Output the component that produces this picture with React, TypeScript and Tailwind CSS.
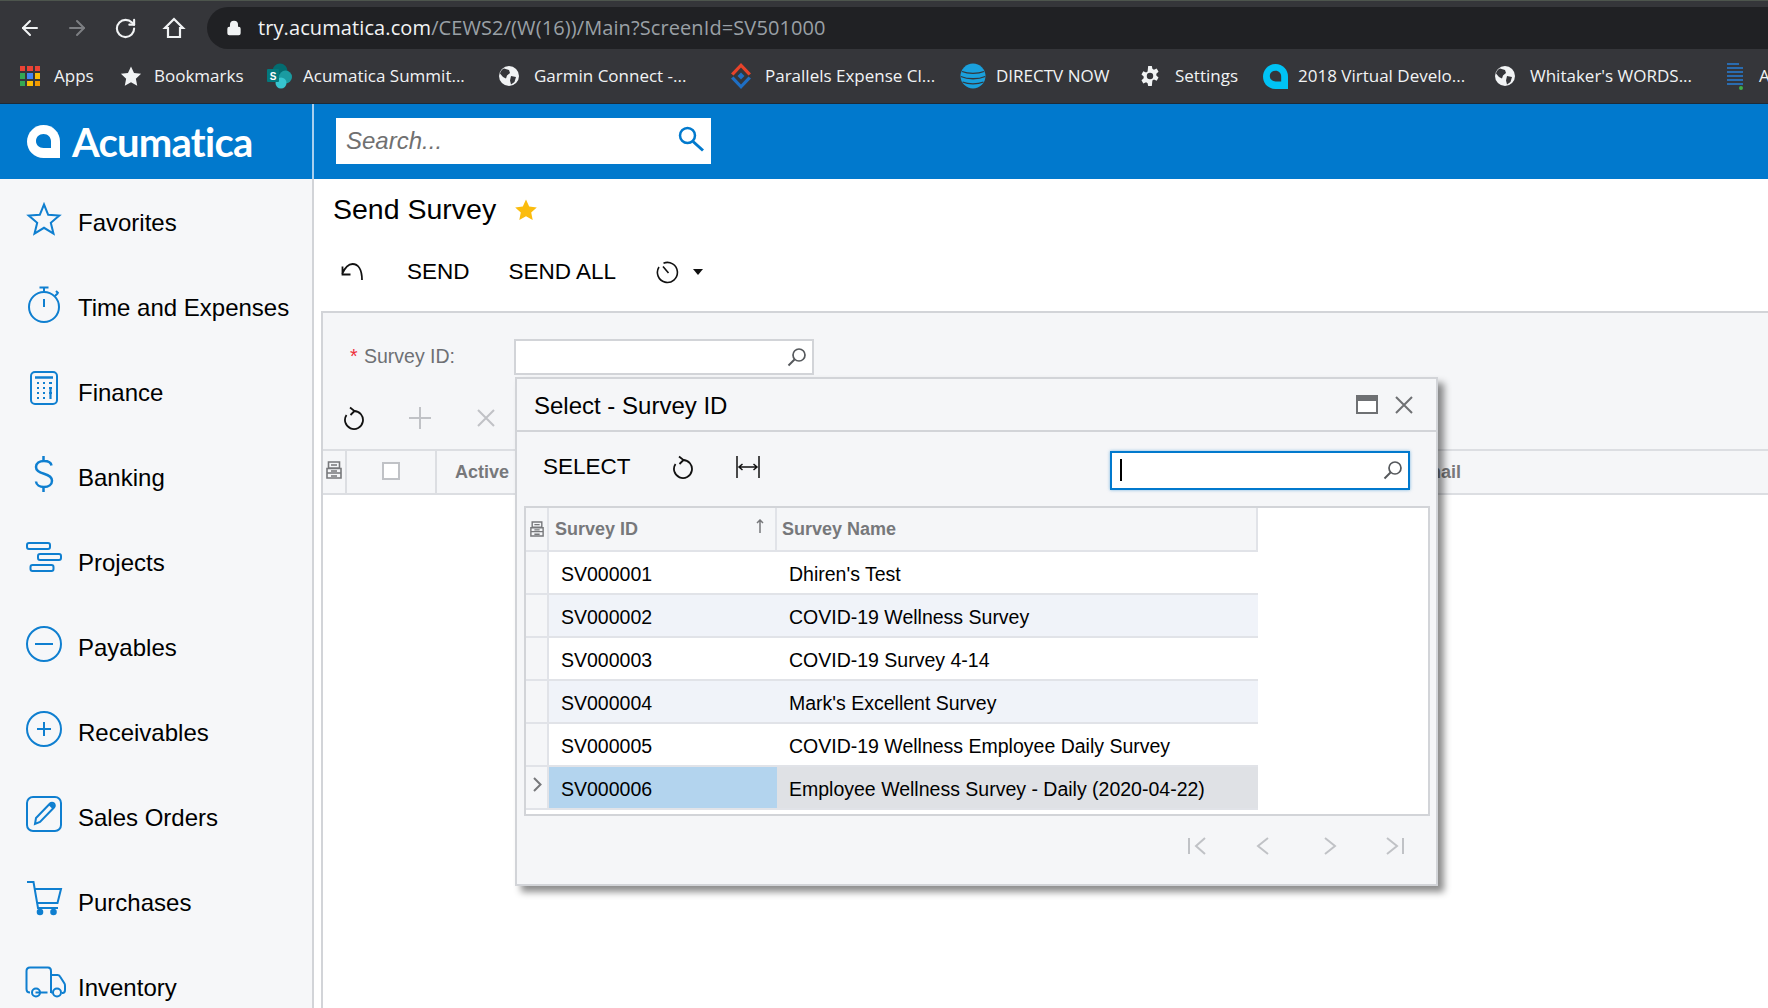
import React from 'react';
import { ArrowLeft, ArrowRight, RotateCw, Lock } from 'lucide-react';

const sansFont = "font-['Liberation_Sans',Arial,sans-serif]";

const Globe = () => (
  <svg width="22" height="22" viewBox="0 0 22 22">
    <circle cx="11" cy="11" r="10" fill="#f1f3f4" />
    <path d="M6 3.5l5 1.5 1 3-3 2.5-1 3-3-1.5-3-3.5C2.5 6 4 4.500 6 3.500zM13 11l5 1-1.500 5-3.500 2.500-1-4z" fill="#35363a" />
  </svg>
);

const AppsIcon = () => {
  const colors = ['#ea4335', '#ea4335', '#ea4335', '#34a853', '#4285f4', '#fbbc05', '#34a853', '#fbbc05', '#f29900'];
  return (
    <div className="grid grid-cols-3 gap-[2px] w-[20px]">
      {colors.map((c, i) => (
        <span key={i} className="w-[5.300px] h-[5.300px]" style={{ backgroundColor: c }} />
      ))}
    </div>
  );
};

const SharePointIcon = () => (
  <svg width="26" height="26" viewBox="0 0 26 26">
    <circle cx="13" cy="8" r="7.500" fill="#036c70" />
    <circle cx="18.500" cy="14" r="6.500" fill="#1a9ba1" />
    <circle cx="14" cy="20" r="5.500" fill="#37c6d0" />
    <rect x="0" y="6" width="12" height="13" rx="1" fill="#03787c" />
    <text x="6" y="16.500" textAnchor="middle" fontSize="10" fontWeight="700" fill="#fff" fontFamily="Liberation Sans">S</text>
  </svg>
);

const ParallelsIcon = () => (
  <svg width="22" height="26" viewBox="0 0 22 26">
    <path d="M11 0L21 10.500 18.500 12.500 11 4.500 3.500 12.500 1 10.500z" fill="#e8432a" />
    <path d="M1 15.500L3.500 13.500 11 21.500 18.500 13.500 21 15.500 11 26z" fill="#1f6fc4" />
    <path d="M11 9.500L14.500 13 11 16.500 7.500 13z" fill="#1f6fc4" />
  </svg>
);

const AttIcon = () => (
  <svg width="26" height="26" viewBox="0 0 26 26">
    <circle cx="13" cy="13" r="12.500" fill="#1aa0dc" />
    <path d="M2 8.500c6 2.500 16 2.500 22 0M.800 13.500c7 3 17.500 3 24.400 0M2.500 19c6 2.500 15 2.500 21 0" stroke="#35363a" strokeWidth="1.300" fill="none" />
  </svg>
);

const GearIcon = () => (
  <svg width="22" height="24" viewBox="0 0 24 24" fill="#f1f3f4">
    <path fillRule="evenodd" d="M10 1h4l.6 3.200 1.700.9 3-1.200 2 3.500-2.400 2.100v2l2.400 2.100-2 3.500-3-1.200-1.700.9L14 23h-4l-.6-3.200-1.700-.9-3 1.200-2-3.500 2.400-2.100v-2L2.700 10.400l2-3.500 3 1.200 1.700-.9zM12 8.500a3.500 3.500 0 100 7 3.500 3.500 0 000-7z" />
  </svg>
);

const LogoMark = ({ color, hole, size }: { color: string; hole: string; size: number }) => (
  <svg width={size} height={size} viewBox="0 0 33 33">
    <path d="M16.500 0C26 0 33 7.500 33 16.500V33H16.500C7.500 33 0 26 0 16.500 0 7.500 7.500 0 16.500 0z" fill={color} />
    <path d="M16.500 9c4.500 0 7.500 3.500 7.500 7.500v6.500h-7.500C12 23 9 20 9 16c0-4 3-7 7.500-7z" fill={hole} />
  </svg>
);

const ListLinesIcon = () => (
  <svg width="20" height="28" viewBox="0 0 20 28">
    <path d="M2 2h12M2 6h16M2 10h16M2 14h16M2 18h16M2 22h16" stroke="#2a6cb0" strokeWidth="2" />
    <circle cx="16" cy="26" r="2" fill="#3fae49" />
  </svg>
);

const bookmarks = [
  { label: 'Apps', icon: <AppsIcon />, width: 'w-[100px]', iconBox: 'w-[34px]' },
  { label: 'Bookmarks', icon: <svg width="22" height="22" viewBox="0 0 24 24" fill="#f1f3f4"><path d="M12 1.500l3.300 7.200 7.700.9-5.700 5.300 1.500 7.800-6.800-3.900-6.800 3.900 1.500-7.800L1 9.600l7.700-.9z" /></svg>, width: 'w-[147px]', iconBox: 'w-[34px]' },
  { label: 'Acumatica Summit...', icon: <SharePointIcon />, width: 'w-[231px]', iconBox: 'w-[36px]' },
  { label: 'Garmin Connect -...', icon: <Globe />, width: 'w-[232px]', iconBox: 'w-[36px]' },
  { label: 'Parallels Expense Cl...', icon: <ParallelsIcon />, width: 'w-[230px]', iconBox: 'w-[35px]' },
  { label: 'DIRECTV NOW', icon: <AttIcon />, width: 'w-[179px]', iconBox: 'w-[36px]' },
  { label: 'Settings', icon: <GearIcon />, width: 'w-[124px]', iconBox: 'w-[36px]' },
  { label: '2018 Virtual Develo...', icon: <LogoMark color="#00c3f5" hole="#35363a" size={25} />, width: 'w-[231px]', iconBox: 'w-[35px]' },
  { label: "Whitaker's WORDS...", icon: <Globe />, width: 'w-[231px]', iconBox: 'w-[36px]' },
  { label: 'A', icon: <ListLinesIcon />, width: 'w-[60px]', iconBox: 'w-[34px]' },
];

const BLUE = '#0f7fd0';

const navItems = [
  {
    label: 'Favorites',
    icon: <path d="M18 3.500l4.200 10.300 11.100.8-8.500 7.200 2.700 10.900-9.500-5.900-9.500 5.900 2.700-10.900-8.500-7.200 11.100-.8z" />,
  },
  {
    label: 'Time and Expenses',
    icon: (
      <>
        <circle cx="18" cy="21" r="15" />
        <path d="M18 13v8M13.500 1.500h9M18 1.500v4M30 5l2.500 2.500M29 10l3-3" />
      </>
    ),
  },
  {
    label: 'Finance',
    icon: (
      <>
        <rect x="5" y="1" width="26" height="32" rx="4" />
        <path d="M9 6.500h18" strokeWidth="2.500" />
        <path d="M11 12h2M17 12h2M23 12h3M11 17h2M17 17h2M23 17h3M11 22h2M17 22h2M23 22h3M11 27h2M17 27h2M24.500 17v11" strokeWidth="2.200" />
      </>
    ),
  },
  {
    label: 'Banking',
    icon: <path strokeWidth="2.500" d="M25.500 9.500C25 6.500 22 5 18 5c-4.500 0-8 2.300-8 6 0 3.700 3.500 5.500 8 6.800 4.500 1.300 8 3 8 6.900 0 3.800-3.500 6.300-8 6.300-4.300 0-7.700-2-8-5.500M17.500 0v5M17.500 31v5" />,
  },
  {
    label: 'Projects',
    icon: (
      <>
        <rect x="1" y="2" width="23" height="6" rx="2" />
        <rect x="12" y="13" width="23" height="6" rx="2" />
        <rect x="4.500" y="24" width="23" height="6" rx="2" />
      </>
    ),
  },
  {
    label: 'Payables',
    icon: (
      <>
        <circle cx="18" cy="18" r="17" />
        <path d="M9 18h18" />
      </>
    ),
  },
  {
    label: 'Receivables',
    icon: (
      <>
        <circle cx="18" cy="18" r="17" />
        <path d="M11 18h14M18 11v14" />
      </>
    ),
  },
  {
    label: 'Sales Orders',
    icon: (
      <>
        <rect x="1" y="1" width="34" height="34" rx="6" />
        <path d="M9 28l1-6L24 7.500c1-1 3-1 4 0s1 3 0 4L14 26z" />
        <path d="M24 7.500l4 4" strokeWidth="4" />
      </>
    ),
  },
  {
    label: 'Purchases',
    icon: (
      <>
        <path d="M1 1h6.500l4.500 26h20M9 8h26l-3.500 14H11" />
        <circle cx="14" cy="31" r="2.300" fill={BLUE} />
        <circle cx="27.500" cy="31" r="2.300" fill={BLUE} />
      </>
    ),
  },
  {
    label: 'Inventory',
    icon: (
      <>
        <path d="M4 26.500c-2 0-3.500-1-3.500-3.500V5c0-2 1.500-3.500 3.500-3.500h18c2 0 3 1.500 3 3.500v22M9.500 26.500h12M25 9h6.500c1 0 2 .5 2.500 1.500l4.500 7c.5.800.5 1.500.5 2.500v4c0 2-1 3-2.500 3H36M25 26.500h1.500" />
        <circle cx="10" cy="26.500" r="4" />
        <circle cx="31" cy="26.500" r="4" />
      </>
    ),
  },
];

const surveys = [
  ['SV000001', "Dhiren's Test"],
  ['SV000002', 'COVID-19 Wellness Survey'],
  ['SV000003', 'COVID-19 Survey 4-14'],
  ['SV000004', "Mark's Excellent Survey"],
  ['SV000005', 'COVID-19 Wellness Employee Daily Survey'],
  ['SV000006', 'Employee Wellness Survey - Daily (2020-04-22)'],
];

const ColumnIcon = ({ size = 16 }: { size?: number }) => (
  <svg width={size} height={size + 2} viewBox="0 0 16 18" fill="none" stroke="#77787b" strokeWidth="1.600">
    <path d="M2.500 1h11v6h-11zM1 7.500h14V17H1zM1 12h14" />
    <path d="M5 4h6M5 10h6M5 15h6" />
  </svg>
);

const RefreshIcon = () => (
  <svg width="22" height="24" viewBox="0 0 22 24" fill="none" stroke="#111" strokeWidth="1.800">
    <path d="M11 5A9 9 0 1 1 3.500 9" />
    <path d="M7 1.500L11.500 5 7.500 9" />
  </svg>
);

const LensIcon = () => (
  <svg width="20" height="20" viewBox="0 0 20 20" fill="none" stroke="#55585c" strokeWidth="1.700">
    <circle cx="12" cy="8" r="6" />
    <path d="M7.500 12.500L1.500 18.500" strokeWidth="2" />
  </svg>
);

const App: React.FC = () => {
  return (
    <div className={`relative w-[1768px] h-[1008px] overflow-hidden bg-white text-black ${sansFont}`}>
      {/* browser chrome */}
      <div className="h-[1px] bg-[#4d554d]" />
      <div className="h-[48px] bg-[#35363a] flex items-end font-['Open_Sans',sans-serif]">
        <div className="flex items-center h-[42px] shrink-0 w-[207px] pl-[18px]">
          <ArrowLeft size={24} color="#f1f3f4" strokeWidth={2} />
          <ArrowRight size={24} color="#7d7f83" strokeWidth={2} className="ml-[23px]" />
          <RotateCw size={23} color="#f1f3f4" strokeWidth={2.200} className="ml-[25px]" />
          <svg width="24" height="24" viewBox="0 0 24 24" fill="none" stroke="#f1f3f4" strokeWidth="2.200" className="ml-[25px]">
            <path d="M12 3L3 12h3v9h12v-9h3z" />
          </svg>
        </div>
        <div className="flex-1 h-[42px] bg-[#202124] rounded-l-[21px] flex items-center pl-[19px]">
          <Lock size={16} color="#f1f3f4" fill="#f1f3f4" strokeWidth={2} />
          <span className="ml-[16px] text-[20px] tracking-[0.1px] text-[#9aa0a6] whitespace-nowrap">
            <span className="text-[#f1f3f4]">try.acumatica.com</span>/CEWS2/(W(16))/Main?ScreenId=SV501000
          </span>
        </div>
      </div>
      <div className="h-[55px] bg-[#35363a] border-b border-[#1d2b38] flex items-center pl-[20px] font-['Open_Sans',sans-serif] text-[17px] text-[#f1f3f4] whitespace-nowrap">
        {bookmarks.map((b) => (
          <div key={b.label} className={`flex items-center shrink-0 ${b.width}`}>
            <span className={`shrink-0 flex items-center ${b.iconBox}`}>{b.icon}</span>
            <span>{b.label}</span>
          </div>
        ))}
      </div>

      {/* app header */}
      <div className="h-[75px] bg-[#0179cd] flex">
        <div className="w-[312px] shrink-0 flex items-center pl-[27px]">
          <LogoMark color="#ffffff" hole="#0179cd" size={33} />
          <span className="ml-[12px] text-[40px] leading-none font-['Lato',sans-serif] font-bold text-white tracking-[-0.75px]">Acumatica</span>
        </div>
        <div className="w-[2px] bg-[#a9cfee]" />
        <div className="pl-[22px] pt-[14px]">
          <div className="w-[375px] h-[46px] bg-white flex items-center pl-[10px] pr-[7px] justify-between">
            <span className="italic text-[24px] text-[#707070]">Search...</span>
            <svg width="26" height="26" viewBox="0 0 26 26" fill="none" stroke="#0179cd" strokeWidth="2.500" className="-mt-[4px]">
              <circle cx="9.500" cy="9.500" r="7.500" />
              <path d="M15 15.500L25 24.500" strokeWidth="3" />
            </svg>
          </div>
        </div>
      </div>

      <div className="flex h-[829px]">
        {/* sidebar */}
        <nav className="w-[314px] shrink-0 pt-[1px] bg-[#f6f7f9] border-r-2 border-[#d2d4d8]">
          {navItems.map((item) => (
            <div key={item.label} className="h-[85px] flex items-center text-[24px] whitespace-nowrap">
              <svg width="36" height="36" viewBox="0 0 36 36" fill="none" stroke={BLUE} strokeWidth="2" className="ml-[26px] mr-[16px] -mt-[8px] overflow-visible shrink-0">
                {item.icon}
              </svg>
              <span>{item.label}</span>
            </div>
          ))}
        </nav>

        {/* page */}
        <main className="flex-1 flex flex-col min-w-0">
          <div className="h-[61px] flex items-center pl-[19px]">
            <h1 className="text-[28.500px] font-normal">Send Survey</h1>
            <svg width="24" height="24" viewBox="0 0 24 24" fill="#fbbc0d" className="ml-[18px]">
              <path d="M12 1.500l3.200 7 7.600.9-5.600 5.200 1.500 7.500-6.700-3.800-6.700 3.800 1.500-7.500L1.200 9.400l7.600-.9z" />
            </svg>
          </div>
          <div className="h-[71px] pb-[7px] flex items-center pl-[26px] text-[22.500px]">
            <svg width="24" height="20" viewBox="0 0 24 20" fill="none" stroke="#111" strokeWidth="1.800">
              <path d="M2 12C5 5.500 8 2 12.500 2 18 2 22 7 22 18M2.500 4.500v8h8" />
            </svg>
            <span className="ml-[43px]">SEND</span>
            <span className="ml-[39px]">SEND ALL</span>
            <svg width="24" height="24" viewBox="0 0 24 24" fill="none" stroke="#111" strokeWidth="1.600" className="ml-[40px]">
              <path d="M7.500 3.200A10 10 0 1 1 3 7M7 6.500l5.500 6.500" />
            </svg>
            <span className="ml-[13px] w-0 h-0 border-x-[5.500px] border-x-transparent border-t-[6px] border-t-[#111]" />
          </div>

          <section className="flex-1 ml-[7px] bg-[#f5f6f8] border-t-2 border-l-2 border-[#d2d4d8] flex flex-col min-h-0">
            <div className="h-[64px] pt-[26px] flex items-start">
              <div className="h-[36px] flex items-center pl-[27px] w-[191px] text-[19.500px] text-[#6e7074]">
                <span className="text-[#ee2f3c] mr-[5px] w-[9px]">*</span>
                <span>Survey ID:</span>
              </div>
              <div className="w-[300px] h-[36px] bg-white border-2 border-[#d2d4d8] flex items-center justify-end pr-[5px]">
                <LensIcon />
              </div>
            </div>
            <div className="h-[72px] flex items-center pl-[20px] pt-[10px]">
              <RefreshIcon />
              <svg width="22" height="22" viewBox="0 0 22 22" stroke="#c0c2c6" strokeWidth="2" className="ml-[44px]">
                <path d="M11 0v22M0 11h22" />
              </svg>
              <svg width="18" height="18" viewBox="0 0 18 18" stroke="#c0c2c6" strokeWidth="2" className="ml-[46px]">
                <path d="M1 1l16 16M17 1L1 17" />
              </svg>
            </div>
            <div className="h-[46px] border-y-2 border-[#dcdee2] flex items-stretch text-[18px] font-bold text-[#77787b]">
              <div className="w-[24px] pb-[4px] border-r-2 border-[#dcdee2] flex items-center justify-center"><ColumnIcon /></div>
              <div className="w-[90px] pb-[3px] border-r-2 border-[#dcdee2] flex items-center justify-center">
                <span className="w-[18px] h-[18px] bg-white border-2 border-[#c0c2c6]" />
              </div>
              <div className="w-[976px] pl-[18px] flex items-center">Active</div>
              <div className="flex items-center">Email</div>
            </div>
            <div className="flex-1 bg-white" />
          </section>
        </main>
      </div>

      {/* lookup dialog */}
      <div className="absolute left-[515px] top-[377px] w-[923px] h-[509px] bg-[#f5f6f8] border-2 border-[#d2d4d8] shadow-[6px_6px_7px_rgba(0,0,0,0.45)] flex flex-col">
        <div className="h-[53px] border-b-2 border-[#d2d4d8] flex items-center pl-[17px] pr-[23px] shrink-0">
          <span className="text-[24px] flex-1 pt-[2px]">Select - Survey ID</span>
          <div className="w-[22px] h-[19px] border-2 border-[#6e7073] border-t-[6px] bg-white" />
          <svg width="18" height="18" viewBox="0 0 18 18" stroke="#6e7073" strokeWidth="2" className="ml-[17px]">
            <path d="M1 1l16 16M17 1L1 17" />
          </svg>
        </div>
        <div className="h-[74px] shrink-0 flex items-center pl-[26px] pr-[26px] text-[22.500px]">
          <span className="-mt-[5px]">SELECT</span>
          <span className="ml-[41px] -mt-[5px]"><RefreshIcon /></span>
          <svg width="24" height="22" viewBox="0 0 24 22" fill="none" stroke="#111" strokeWidth="1.500" className="ml-[42px] -mt-[5px]">
            <path d="M1 0v22M23 0v22M3 11h18M6.500 8L3 11l3.500 3M17.500 8l3.500 3-3.500 3" />
          </svg>
          <div className="ml-auto mt-[2px] w-[300px] h-[39px] bg-white border-2 border-[#0179cd] shadow-[0_0_3px_rgba(1,121,205,0.5)] flex items-center justify-between pl-[8px] pr-[5px]">
            <span className="w-[2px] h-[22px] bg-black" />
            <LensIcon />
          </div>
        </div>

        <div className="ml-[7px] mr-[6px] h-[310px] bg-white border-2 border-[#d2d4d8] shrink-0">
          <div className="w-[732px]">
            <div className="h-[44px] flex bg-[#f5f6f8] border-b-2 border-r-2 border-[#e1e3e8] text-[18px] font-bold text-[#77787b]">
              <div className="w-[23px] shrink-0 border-r-2 border-[#e1e3e8] flex items-center justify-center"><ColumnIcon size={14} /></div>
              <div className="w-[228px] shrink-0 border-r-2 border-[#e1e3e8] flex items-center justify-between pl-[6px] pr-[11px]">
                <span>Survey ID</span>
                <svg width="8" height="14" viewBox="0 0 8 14" fill="none" stroke="#77787b" strokeWidth="1.500" className="-mt-[6px]">
                  <path d="M4 14V1M1 4l3-3 3 3" />
                </svg>
              </div>
              <div className="flex-1 flex items-center pl-[5px]">Survey Name</div>
            </div>
            {surveys.map(([id, name], i) => {
              const selected = i === 5;
              const rowBg = i % 2 === 1 ? 'bg-[#f0f3f9]' : 'bg-white';
              return (
                <div key={id} className="h-[43px] flex border-b-2 border-[#e1e3e8] text-[19.500px] whitespace-nowrap">
                  <div className="w-[23px] shrink-0 bg-[#f5f6f8] border-r-2 border-[#e1e3e8] flex items-center justify-center">
                    {selected && (
                      <svg width="10" height="15" viewBox="0 0 10 15" fill="none" stroke="#77787b" strokeWidth="2" className="-mt-[6px]">
                        <path d="M2 1l6.500 6.500L2 14" />
                      </svg>
                    )}
                  </div>
                  <div className={`w-[228px] shrink-0 flex items-center pl-[12px] pt-[4px] ${selected ? 'bg-[#b3d4ee]' : rowBg}`}>{id}</div>
                  <div className={`flex-1 flex items-center pl-[12px] pt-[4px] ${selected ? 'bg-[#dfe1e5]' : rowBg}`}>{name}</div>
                </div>
              );
            })}
          </div>
        </div>

        <div className="flex-1 flex items-center justify-end pr-[32px] pb-[9px]">
          <svg width="216" height="18" viewBox="0 0 216 18" fill="none" stroke="#c0c2c6" strokeWidth="2">
            <path d="M1 1v16M17 1L8 9l9 8M80 1l-10 8 10 8M137 1l10 8-10 8M199 1l10 8-10 8M215 1v16" />
          </svg>
        </div>
      </div>
    </div>
  );
};

export default App;
